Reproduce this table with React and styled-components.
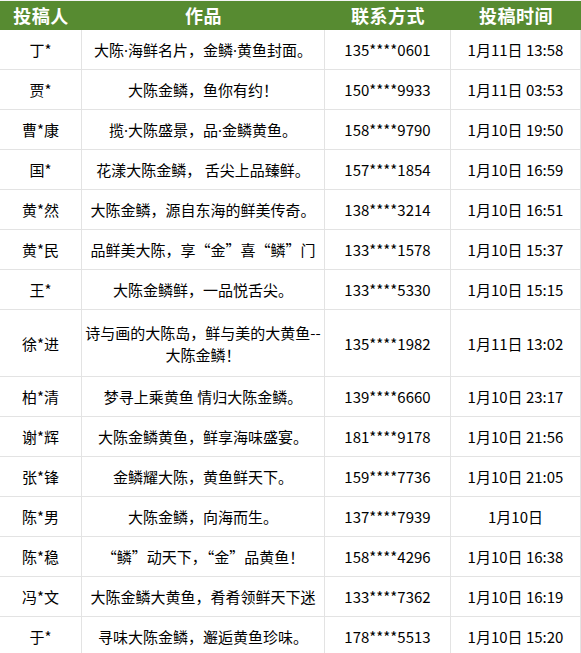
import React from 'react'
import styled, { createGlobalStyle } from 'styled-components'

const GlobalStyle = createGlobalStyle`
  html, body {
    margin: 0;
    padding: 0;
    background: #fff;
  }
  body {
    font-family: 'Noto Sans CJK SC', 'Noto Sans', sans-serif;
    color: #000;
  }
`

const rows = [
  ['丁*', ['大陈·海鲜名片，金鳞·黄鱼封面。'], '135****0601', '1月11日 13:58'],
  ['贾*', ['大陈金鳞，鱼你有约！'], '150****9933', '1月11日 03:53'],
  ['曹*康', ['揽·大陈盛景，品·金鳞黄鱼。'], '158****9790', '1月10日 19:50'],
  ['国*', ['花漾大陈金鳞， 舌尖上品臻鲜。'], '157****1854', '1月10日 16:59'],
  ['黄*然', ['大陈金鳞，源自东海的鲜美传奇。'], '138****3214', '1月10日 16:51'],
  ['黄*民', ['品鲜美大陈，享“金”喜“鳞”门'], '133****1578', '1月10日 15:37'],
  ['王*', ['大陈金鳞鲜，一品悦舌尖。'], '133****5330', '1月10日 15:15'],
  ['徐*进', ['诗与画的大陈岛，鲜与美的大黄鱼--', '大陈金鳞！'], '135****1982', '1月11日 13:02'],
  ['柏*清', ['梦寻上乘黄鱼 情归大陈金鳞。'], '139****6660', '1月10日 23:17'],
  ['谢*辉', ['大陈金鳞黄鱼，鲜享海味盛宴。'], '181****9178', '1月10日 21:56'],
  ['张*锋', ['金鳞耀大陈，黄鱼鲜天下。'], '159****7736', '1月10日 21:05'],
  ['陈*男', ['大陈金鳞，向海而生。'], '137****7939', '1月10日'],
  ['陈*稳', ['“鳞”动天下，“金”品黄鱼！'], '158****4296', '1月10日 16:38'],
  ['冯*文', ['大陈金鳞大黄鱼，肴肴领鲜天下迷'], '133****7362', '1月10日 16:19'],
  ['于*', ['寻味大陈金鳞，邂逅黄鱼珍味。'], '178****5513', '1月10日 15:20'],
]

const Table = styled.div`
  width: 581px;
  display: grid;
  grid-template-columns: 82px 243px 126px 130px;
`

const HeadCell = styled.div`
  height: 30px;
  box-sizing: border-box;
  border-top: 1px solid #f4f4f4;
  background: #578b31;
  background-clip: padding-box;
  color: #fff;
  font-size: 18px;
  font-weight: 700;
  line-height: 29px;
  text-align: center;
  letter-spacing: 0.5px;
`

const Cell = styled.div`
  height: ${(p) => (p.$tall ? 67 : 40)}px;
  box-sizing: border-box;
  border-right: 1px solid #e3e3e3;
  border-bottom: 1px solid #e3e3e3;
  display: flex;
  flex-direction: column;
  align-items: center;
  justify-content: center;
  font-size: 15px;
  line-height: 22px;
  text-align: center;
  white-space: nowrap;
  padding-top: 1px;
`

// narrow latin middle dot, the CJK font draws it full width
const Dot = styled.span`
  font-family: 'Noto Sans', sans-serif;
`

const Line = ({ text }) => {
  const parts = text.split('·')
  return (
    <span>
      {parts.map((p, i) => (
        <React.Fragment key={i}>
          {i > 0 && <Dot>·</Dot>}
          {p}
        </React.Fragment>
      ))}
    </span>
  )
}

export default function App() {
  return (
    <>
      <GlobalStyle />
      <Table>
        <HeadCell>投稿人</HeadCell>
        <HeadCell>作品</HeadCell>
        <HeadCell>联系方式</HeadCell>
        <HeadCell>投稿时间</HeadCell>
        {rows.map(([name, work, phone, time]) => {
          const tall = work.length > 1
          return (
            <React.Fragment key={phone}>
              <Cell $tall={tall}>{name}</Cell>
              <Cell $tall={tall}>
                {work.map((line) => (
                  <Line key={line} text={line} />
                ))}
              </Cell>
              <Cell $tall={tall}>{phone}</Cell>
              <Cell $tall={tall}>{time}</Cell>
            </React.Fragment>
          )
        })}
      </Table>
    </>
  )
}
